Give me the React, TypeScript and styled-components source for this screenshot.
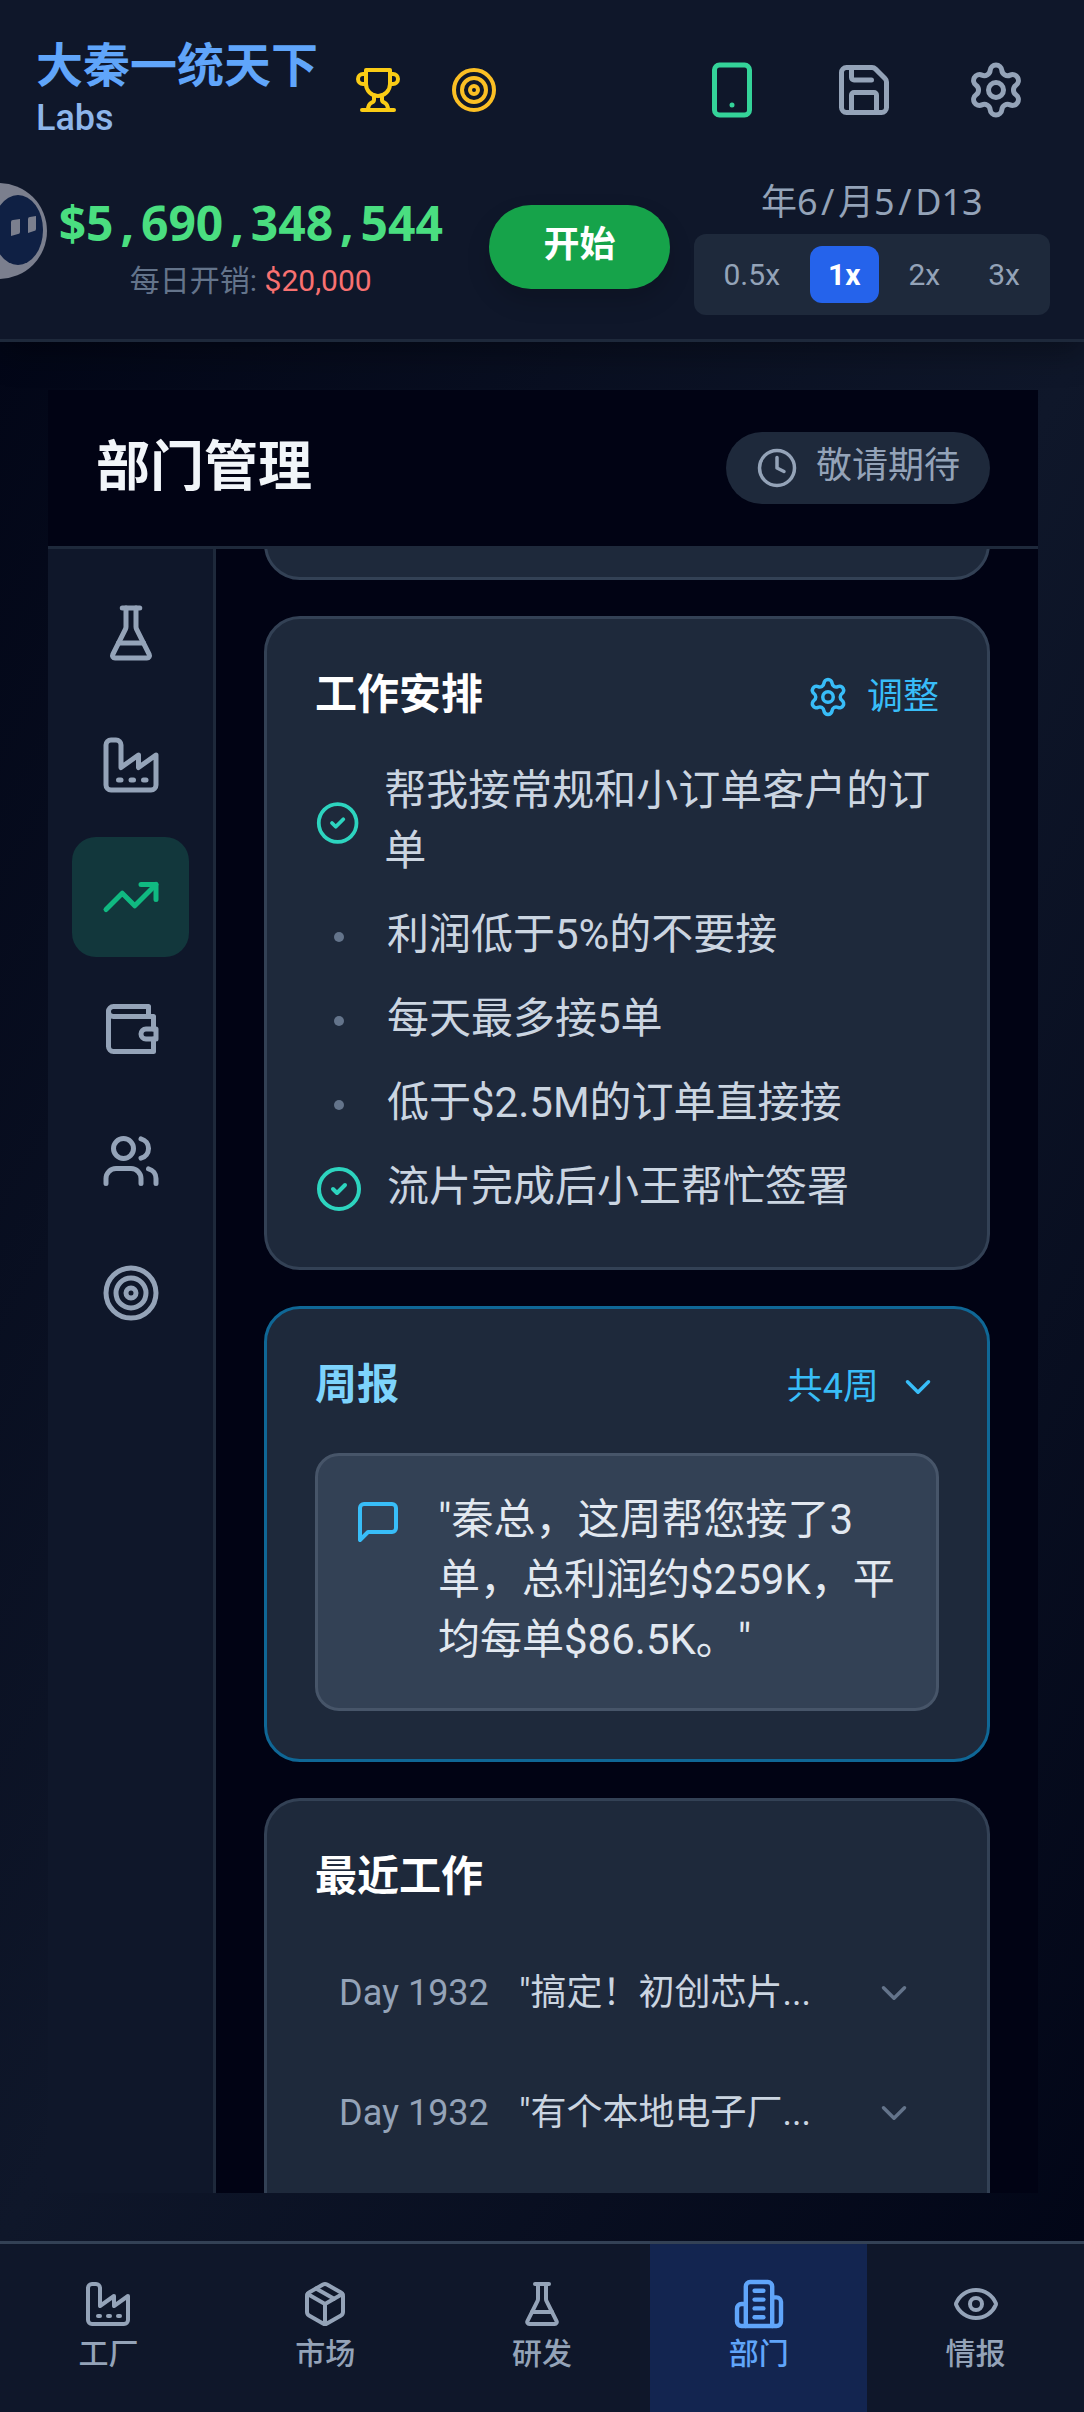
import React, { useState } from "react";
import styled, { createGlobalStyle, css } from "styled-components";
import {
  ChevronDown,
  CircleCheck,
  Clock,
  Eye,
  Save,
  Settings,
  Smartphone,
  Target,
} from "lucide-react";

const sans = `Roboto, "Noto Sans CJK SC", sans-serif`;
const figures = `"Noto Sans", "Noto Sans CJK SC", sans-serif`;

const GlobalStyle = createGlobalStyle`
  *, *::before, *::after { box-sizing: border-box; }
  body { margin: 0; background: #020617; font-family: ${sans}; }
  h1, h2, h3, p, ul { margin: 0; padding: 0; }
  button { font: inherit; border: 0; margin: 0; cursor: pointer; background: none; color: inherit; }
  svg { display: block; flex: none; }
`;

/* ---------- icons ---------- */

const iconPaths = {
  trophy: [
    "M6 9H4.5a2.5 2.5 0 0 1 0-5H6",
    "M18 9h1.5a2.5 2.5 0 0 0 0-5H18",
    "M4 22h16",
    "M10 14.66V17c0 .55-.47.98-.97 1.21C7.85 18.75 7 20.24 7 22",
    "M14 14.66V17c0 .55.47.98.97 1.21C16.15 18.75 17 20.24 17 22",
    "M18 2H6v7a6 6 0 0 0 12 0V2Z",
  ],
  flask: [
    "M10 2v7.527a2 2 0 0 1-.211.896L4.72 20.55a1 1 0 0 0 .9 1.45h12.76a1 1 0 0 0 .9-1.45l-5.069-10.127A2 2 0 0 1 14 9.527V2",
    "M8.5 2h7",
    "M7 16h10",
  ],
  factory: [
    "M2 20a2 2 0 0 0 2 2h16a2 2 0 0 0 2-2V8l-7 5V8l-7 5V4a2 2 0 0 0-2-2H4a2 2 0 0 0-2 2Z",
    "M17 18h1",
    "M12 18h1",
    "M7 18h1",
  ],
  trend: ["M22 7 13.5 15.5 8.5 10.5 2 17", "M16 7h6v6"],
  wallet: [
    "M21 12V7H5a2 2 0 0 1 0-4h14v4",
    "M3 5v14a2 2 0 0 0 2 2h16v-5",
    "M18 12a2 2 0 0 0 0 4h4v-4Z",
  ],
  users: [
    "M16 21v-2a4 4 0 0 0-4-4H6a4 4 0 0 0-4 4v2",
    "M9 3a4 4 0 1 0 0 8a4 4 0 1 0 0-8",
    "M22 21v-2a4 4 0 0 0-3-3.87",
    "M16 3.13a4 4 0 0 1 0 7.75",
  ],
  box: [
    "m7.5 4.27 9 5.15",
    "M21 8a2 2 0 0 0-1-1.73l-7-4a2 2 0 0 0-2 0l-7 4A2 2 0 0 0 3 8v8a2 2 0 0 0 1 1.73l7 4a2 2 0 0 0 2 0l7-4A2 2 0 0 0 21 16Z",
    "m3.3 7 8.7 5 8.7-5",
    "M12 22V12",
  ],
  building: [
    "M6 22V4a2 2 0 0 1 2-2h8a2 2 0 0 1 2 2v18Z",
    "M6 12H4a2 2 0 0 0-2 2v6a2 2 0 0 0 2 2h2",
    "M18 9h2a2 2 0 0 1 2 2v9a2 2 0 0 1-2 2h-2",
    "M10 6h4",
    "M10 10h4",
    "M10 14h4",
    "M10 18h4",
  ],
  message: ["M21 15a2 2 0 0 1-2 2H7l-4 4V5a2 2 0 0 1 2-2h14a2 2 0 0 1 2 2z"],
};

type LineIconName = keyof typeof iconPaths;

function LineIcon({ name, size }: { name: LineIconName; size: number }) {
  return (
    <svg
      width={size}
      height={size}
      viewBox="0 0 24 24"
      fill="none"
      stroke="currentColor"
      strokeWidth={2}
      strokeLinecap="round"
      strokeLinejoin="round"
      aria-hidden="true"
    >
      {iconPaths[name].map((d) => (
        <path key={d} d={d} />
      ))}
    </svg>
  );
}

/* ---------- page ---------- */

const Page = styled.div`
  height: 100vh;
  display: flex;
  flex-direction: column;
  overflow: hidden;
  position: relative;
`;

const Header = styled.header`
  position: relative;
  z-index: 1;
  padding: 38px 34px 24px 36px;
  display: flex;
  flex-direction: column;
  gap: 36px;
  background: #0f172a;
  border-bottom: 3px solid #1e293b;
  box-shadow: 0 12px 30px rgba(0, 0, 0, 0.3);
`;

const HeaderRow = styled.div`
  display: flex;
  align-items: center;
  gap: 24px;
`;

const Brand = styled.div`
  white-space: nowrap;
`;

const BrandName = styled.h1`
  font-size: 47px;
  line-height: 56px;
  font-weight: 700;
  color: #60a5fa;
`;

const BrandSub = styled.p`
  font-size: 36px;
  line-height: 48px;
  font-weight: 500;
  color: #8db5ea;
`;

const Badges = styled.div`
  display: flex;
  gap: 24px;
`;

const BadgeButton = styled.button<{ $color: string }>`
  padding: 12px;
  color: ${(p) => p.$color};
`;

const Tools = styled.div`
  margin-left: auto;
  display: flex;
  gap: 24px;
`;

const ToolButton = styled.button<{ $active?: boolean }>`
  padding: 22px 24px;
  color: ${(p) => (p.$active ? "#34d399" : "#94a3b8")};
`;

const Floating = styled.button`
  position: absolute;
  z-index: 2;
  left: -50px;
  top: 182px;
  padding: 0;
`;

const Funds = styled.div`
  flex: 1;
  display: flex;
  flex-direction: column;
  align-items: center;
  gap: 12px;
  white-space: nowrap;
`;

const Balance = styled.p`
  font-family: ${figures};
  font-size: 48px;
  line-height: 56px;
  font-weight: 700;
  color: #4ade80;
`;

const Mark = styled.span`
  display: inline-block;
  width: 0.57em;
  text-align: center;
`;

const Expense = styled.p`
  font-size: 30px;
  line-height: 36px;
  color: #64748b;
`;

const Cost = styled.span`
  color: #f87171;
`;

const StartButton = styled.button`
  padding: 0 54px;
  height: 84px;
  border-radius: 42px;
  background: #16a34a;
  color: #fff;
  font-size: 36px;
  line-height: 48px;
  padding-bottom: 4px;
  font-weight: 700;
  white-space: nowrap;
  box-shadow: 0 12px 24px rgba(0, 0, 0, 0.16);
`;

const Timing = styled.div`
  display: flex;
  flex-direction: column;
  align-items: center;
  gap: 8px;
`;

const DateText = styled.p`
  font-family: ${figures};
  font-size: 36px;
  line-height: 48px;
  color: #94a3b8;
  white-space: nowrap;
`;

const SpeedBox = styled.div`
  display: flex;
  gap: 12px;
  padding: 12px;
  border-radius: 12px;
  background: #1e293b;
`;

const SpeedButton = styled.button<{ $active: boolean }>`
  height: 57px;
  padding: 0 18px;
  border-radius: 12px;
  font-size: 30px;
  color: #94a3b8;
  ${(p) =>
    p.$active &&
    css`
      background: #2563eb;
      color: #fff;
      font-weight: 700;
    `}
`;

/* ---------- department panel ---------- */

const Main = styled.main`
  flex: 1;
  min-height: 0;
  display: flex;
  padding: 48px 46px 48px 48px;
  background: linear-gradient(to bottom right, #020617, #0f172a, #020617);
`;

const Panel = styled.section`
  flex: 1;
  min-width: 0;
  display: flex;
  flex-direction: column;
  background: #010314;
`;

const PanelHead = styled.div`
  display: flex;
  align-items: center;
  justify-content: space-between;
  padding: 42px 48px;
  border-bottom: 3px solid #1e293b;
`;

const PanelTitle = styled.h2`
  font-size: 54px;
  line-height: 72px;
  font-weight: 700;
  color: #f1f5f9;
`;

const Soon = styled.div`
  display: flex;
  align-items: center;
  gap: 18px;
  height: 72px;
  padding: 0 30px;
  border-radius: 36px;
  background: #1e293b;
  color: #94a3b8;
  font-size: 36px;
  line-height: 48px;
`;

const SoonText = styled.span`
  padding-bottom: 4px;
`;

const PanelBody = styled.div`
  flex: 1;
  min-height: 0;
  display: flex;
`;

const Side = styled.nav`
  width: 168px;
  display: flex;
  flex-direction: column;
  gap: 12px;
  padding: 24px;
  background: #0f172a;
  border-right: 3px solid #1e293b;
`;

const SideButton = styled.button<{ $active: boolean }>`
  height: 120px;
  padding: 0;
  display: flex;
  align-items: center;
  justify-content: center;
  border-radius: 24px;
  color: ${(p) => (p.$active ? "#10b981" : "#94a3b8")};
  background: ${(p) => (p.$active ? "#12373c" : "transparent")};
`;

const Feed = styled.div`
  flex: 1;
  min-width: 0;
  display: flex;
  flex-direction: column;
  gap: 36px;
  padding: 0 48px;
  overflow: hidden;
`;

const Card = styled.article<{ $accent?: boolean }>`
  flex: none;
  padding: 48px;
  border: 3px solid ${(p) => (p.$accent ? "#0f6796" : "#334155")};
  border-radius: 36px;
  background: #1e293b;
`;

const LastCard = styled(Card)`
  flex: 1 0 0;
  border-bottom: 0;
  border-radius: 36px 36px 0 0;
`;

const Peek = styled.div`
  flex: none;
  height: 31px;
  display: flex;
  flex-direction: column;
  justify-content: flex-end;
  overflow: hidden;
`;

const CardHead = styled.div`
  display: flex;
  align-items: center;
  justify-content: space-between;
  margin-bottom: 36px;
`;

const CardTitle = styled.h3<{ $accent?: boolean }>`
  font-size: 42px;
  line-height: 56px;
  padding-bottom: 4px;
  font-weight: 700;
  color: ${(p) => (p.$accent ? "#7dd3fc" : "#fff")};
`;

const CardAction = styled.button`
  display: flex;
  align-items: center;
  gap: 18px;
  padding: 0;
  font-size: 36px;
  line-height: 54px;
  color: #38bdf8;
`;

const Tasks = styled.ul`
  display: flex;
  flex-direction: column;
  gap: 24px;
  list-style: none;
`;

const Task = styled.li`
  display: flex;
  align-items: center;
  gap: 24px;
  font-size: 42px;
  line-height: 60px;
  color: #cbd5e1;
`;

const TaskMark = styled.span`
  flex: 0 1 48px;
  min-width: 0;
  display: flex;
  justify-content: center;
  color: #2dd4bf;

  svg {
    flex: 0 1 auto;
    width: 100%;
  }
`;

const TaskText = styled.span`
  margin: -2px 0 2px;
`;

const Dot = styled.span`
  width: 10px;
  height: 10px;
  border-radius: 50%;
  background: #64748b;
`;

const Quote = styled.div`
  display: flex;
  align-items: flex-start;
  gap: 36px;
  padding: 34px 36px 38px;
  border: 3px solid #475569;
  border-radius: 24px;
  background: #334155;
`;

const QuoteIcon = styled.span`
  padding-top: 8px;
  color: #38bdf8;
`;

const QuoteText = styled.p`
  flex: 1;
  font-size: 42px;
  line-height: 60px;
  color: #e2e8f0;
`;

const LogRow = styled.button`
  width: 100%;
  display: flex;
  align-items: center;
  gap: 24px;
  padding: 24px;
  font-size: 36px;
  line-height: 48px;
  white-space: nowrap;
  text-align: left;

  & + & {
    margin-top: 24px;
  }
`;

const LogDay = styled.span`
  min-width: 156px;
  color: #94a3b8;
`;

const LogText = styled.span`
  flex: 1;
  color: #cbd5e1;
`;

const LogArrow = styled.span`
  color: #64748b;
`;

/* ---------- bottom navigation ---------- */

const TabBar = styled.nav`
  display: flex;
  background: #0f172a;
  border-top: 3px solid #334155;
`;

const Tab = styled.a<{ $active: boolean }>`
  flex: 1;
  display: flex;
  flex-direction: column;
  align-items: center;
  gap: 8px;
  padding: 36px 0 40px;
  font-size: 30px;
  line-height: 36px;
  font-weight: 500;
  text-decoration: none;
  color: ${(p) => (p.$active ? "#60a5fa" : "#94a3b8")};
  background: ${(p) => (p.$active ? "#132550" : "transparent")};
`;

const TabIcon = styled.span<{ $active: boolean }>`
  ${(p) => p.$active && "transform: scale(1.1);"}
`;

const speeds = ["0.5x", "1x", "2x", "3x"];

const departments: { label: string; icon: React.ReactNode }[] = [
  { label: "研发", icon: <LineIcon name="flask" size={60} /> },
  { label: "工厂", icon: <LineIcon name="factory" size={60} /> },
  { label: "销售", icon: <LineIcon name="trend" size={60} /> },
  { label: "财务", icon: <LineIcon name="wallet" size={60} /> },
  { label: "人事", icon: <LineIcon name="users" size={60} /> },
  { label: "战略", icon: <Target size={60} /> },
];

const tasks = [
  { text: "帮我接常规和小订单客户的订单", main: true },
  { text: "利润低于5%的不要接", main: false },
  { text: "每天最多接5单", main: false },
  { text: "低于$2.5M的订单直接接", main: false },
  { text: "流片完成后小王帮忙签署", main: true },
];

const logs = [
  { day: "Day 1932", text: '"搞定！初创芯片...' },
  { day: "Day 1932", text: '"有个本地电子厂...' },
];

const tabs: { label: string; icon: React.ReactNode }[] = [
  { label: "工厂", icon: <LineIcon name="factory" size={48} /> },
  { label: "市场", icon: <LineIcon name="box" size={48} /> },
  { label: "研发", icon: <LineIcon name="flask" size={48} /> },
  { label: "部门", icon: <LineIcon name="building" size={48} /> },
  { label: "情报", icon: <Eye size={48} /> },
];

function Spaced({ text, mark }: { text: string; mark: string }) {
  return (
    <>
      {text.split("").map((c, i) => (c === mark ? <Mark key={i}>{c}</Mark> : c))}
    </>
  );
}

export default function App() {
  const [speed, setSpeed] = useState("1x");
  const [department, setDepartment] = useState(2);
  const [tab, setTab] = useState(3);

  return (
    <Page lang="zh-CN">
      <GlobalStyle />
      <Header>
        <HeaderRow>
          <Brand>
            <BrandName>大秦一统天下</BrandName>
            <BrandSub>Labs</BrandSub>
          </Brand>
          <Badges>
            <BadgeButton $color="#facc15" aria-label="成就">
              <LineIcon name="trophy" size={48} />
            </BadgeButton>
            <BadgeButton $color="#fbbf24" aria-label="目标">
              <Target size={48} />
            </BadgeButton>
          </Badges>
          <Tools>
            <ToolButton $active aria-label="手机模式">
              <Smartphone size={60} />
            </ToolButton>
            <ToolButton aria-label="保存">
              <Save size={60} />
            </ToolButton>
            <ToolButton aria-label="设置">
              <Settings size={60} />
            </ToolButton>
          </Tools>
        </HeaderRow>
        <HeaderRow>
          <Funds>
            <Balance>
              <Spaced text="$5,690,348,544" mark="," />
            </Balance>
            <Expense>
              每日开销: <Cost>$20,000</Cost>
            </Expense>
          </Funds>
          <StartButton>开始</StartButton>
          <Timing>
            <DateText>
              <Spaced text="年6/月5/D13" mark="/" />
            </DateText>
            <SpeedBox>
              {speeds.map((s) => (
                <SpeedButton key={s} $active={s === speed} onClick={() => setSpeed(s)}>
                  {s}
                </SpeedButton>
              ))}
            </SpeedBox>
          </Timing>
        </HeaderRow>
      </Header>

      <Floating aria-label="助手">
        <svg width="98" height="98" viewBox="0 0 98 98" aria-hidden="true">
          <circle cx="49" cy="49" r="48" fill="#7b7f8e" />
          <ellipse cx="68" cy="48" rx="25" ry="35" fill="#0f2044" />
          <path d="M61 40q0-2 2-2l7-1v13q0 2-2 2l-7 2z" fill="#7b7f8e" />
          <path d="M78 37q0-2 2-2l6-1v13q0 2-2 2l-6 2z" fill="#7b7f8e" />
        </svg>
      </Floating>

      <Main>
        <Panel>
          <PanelHead>
            <PanelTitle>部门管理</PanelTitle>
            <Soon>
              <Clock size={42} />
              <SoonText>敬请期待</SoonText>
            </Soon>
          </PanelHead>
          <PanelBody>
            <Side>
              {departments.map((d, i) => (
                <SideButton
                  key={d.label}
                  aria-label={d.label}
                  $active={i === department}
                  onClick={() => setDepartment(i)}
                >
                  {d.icon}
                </SideButton>
              ))}
            </Side>
            <Feed>
              <Peek>
                <Card />
              </Peek>

              <Card>
                <CardHead>
                  <CardTitle>工作安排</CardTitle>
                  <CardAction>
                    <Settings size={42} />
                    调整
                  </CardAction>
                </CardHead>
                <Tasks>
                  {tasks.map((t) => (
                    <Task key={t.text}>
                      <TaskMark>{t.main ? <CircleCheck size={48} /> : <Dot />}</TaskMark>
                      <TaskText>{t.text}</TaskText>
                    </Task>
                  ))}
                </Tasks>
              </Card>

              <Card $accent>
                <CardHead>
                  <CardTitle $accent>周报</CardTitle>
                  <CardAction>
                    共4周
                    <ChevronDown size={42} />
                  </CardAction>
                </CardHead>
                <Quote>
                  <QuoteIcon>
                    <LineIcon name="message" size={48} />
                  </QuoteIcon>
                  <QuoteText>"秦总，这周帮您接了3单，总利润约$259K，平均每单$86.5K。"</QuoteText>
                </Quote>
              </Card>

              <LastCard>
                <CardHead>
                  <CardTitle>最近工作</CardTitle>
                </CardHead>
                {logs.map((l) => (
                  <LogRow key={l.text}>
                    <LogDay>{l.day}</LogDay>
                    <LogText>{l.text}</LogText>
                    <LogArrow>
                      <ChevronDown size={42} />
                    </LogArrow>
                  </LogRow>
                ))}
              </LastCard>
            </Feed>
          </PanelBody>
        </Panel>
      </Main>

      <TabBar>
        {tabs.map((t, i) => (
          <Tab
            key={t.label}
            href="#"
            $active={i === tab}
            onClick={(e) => {
              e.preventDefault();
              setTab(i);
            }}
          >
            <TabIcon $active={i === tab}>{t.icon}</TabIcon>
            {t.label}
          </Tab>
        ))}
      </TabBar>
    </Page>
  );
}
